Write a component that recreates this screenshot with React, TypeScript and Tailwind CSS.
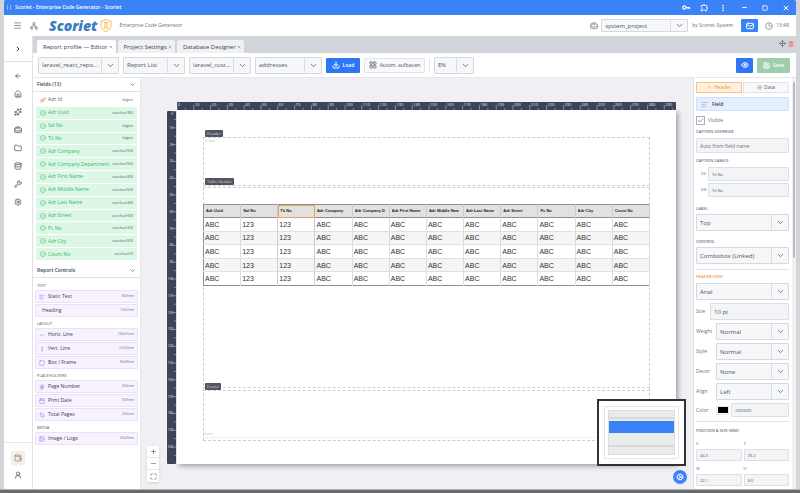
import type { ReactNode } from 'react';
import {
  AlignLeft,
  ArrowLeft,
  ArrowUp,
  ArrowUpDown,
  BriefcaseBusiness,
  Calendar,
  Check,
  ChevronDown,
  ChevronRight,
  CircleCheck,
  Clock,
  Cog,
  Database,
  Download,
  EllipsisVertical,
  Eye,
  Folder,
  Hash,
  House,
  Image,
  Key,
  LayoutGrid,
  List,
  Mail,
  Maximize,
  Menu,
  Minus,
  Move,
  Network,
  Plus,
  Save,
  Settings,
  Sparkles,
  Square,
  Trash2,
  UserRound,
  Wallet,
  Wrench,
  X,
} from 'lucide-react';
import { MdOutlineExtension } from 'react-icons/md';
import clsx from 'clsx';

const fields = [
  ['Adr Uuid', 'varchar(36)'],
  ['Sal No', 'bigint'],
  ['Tit No', 'bigint'],
  ['Adr Company', 'varchar(50)'],
  ['Adr Company Department', 'varchar(50)'],
  ['Adr First Name', 'varchar(40)'],
  ['Adr Middle Name', 'varchar(50)'],
  ['Adr Last Name', 'varchar(40)'],
  ['Adr Street', 'varchar(50)'],
  ['Pc No', 'varchar(20)'],
  ['Adr City', 'varchar(50)'],
  ['Count No', 'varchar(2)'],
];

const controlGroups = [
  {
    title: 'TEXT',
    items: [
      { label: 'Static Text', size: '80x5mm', icon: AlignLeft },
      { label: 'Heading', size: '100x7mm', icon: null },
    ],
  },
  {
    title: 'LAYOUT',
    items: [
      { label: 'Horiz. Line', size: '100x0.5mm', icon: Minus },
      { label: 'Vert. Line', size: '0.5x50mm', icon: EllipsisVertical },
      { label: 'Box / Frame', size: '80x40mm', icon: Square },
    ],
  },
  {
    title: 'PLACEHOLDERS',
    items: [
      { label: 'Page Number', size: '20x5mm', icon: Hash },
      { label: 'Print Date', size: '30x5mm', icon: Calendar },
      { label: 'Total Pages', size: '20x5mm', icon: ArrowUpDown },
    ],
  },
  {
    title: 'MEDIA',
    items: [{ label: 'Image / Logo', size: '40x20mm', icon: Image }],
  },
];

const navItems = [
  { label: 'Back', icon: ArrowLeft },
  { label: 'Home', icon: House },
  { label: 'Assistant', icon: Sparkles },
  { label: 'Projects', icon: BriefcaseBusiness },
  { label: 'Files', icon: Folder },
  { label: 'Database', icon: Database },
  { label: 'Tools', icon: Wrench },
  { label: 'Settings', icon: Settings },
];

const rows = [0, 1, 2, 3, 4];

interface SelectBoxProps {
  label: string;
  value: string;
  id?: string;
  className?: string;
}

function SelectBox({ label, value, id, className }: SelectBoxProps) {
  return (
    <div
      className={clsx(
        'grid grid-cols-[minmax(0,1fr)_17px] rounded-[1px] border border-[#d5d9de] bg-[#f6f7f9]',
        className,
      )}
    >
      <select
        id={id}
        aria-label={id ? undefined : label}
        className="col-span-2 col-start-1 row-start-1 min-w-0 appearance-none bg-transparent pl-[3px] pr-[17px] text-[6px] text-[#4b5563] outline-none"
      >
        <option>{value}</option>
      </select>
      <span className="pointer-events-none col-start-2 row-start-1 flex items-center justify-center border-l border-[#d9dde2] text-[#4b5563]">
        <ChevronDown size={9} />
      </span>
    </div>
  );
}

interface TextBoxProps {
  label: string;
  value?: string;
  placeholder?: string;
  id?: string;
  className?: string;
}

function TextBox({ label, value, placeholder, id, className }: TextBoxProps) {
  return (
    <input
      type="text"
      id={id}
      aria-label={id ? undefined : label}
      defaultValue={value}
      placeholder={placeholder}
      className={clsx(
        'min-w-0 rounded-[1px] border border-[#dcdfe3] bg-[#f3f4f6] px-[3px] text-[#4b5563] outline-none placeholder:text-[#6b7280]',
        className,
      )}
    />
  );
}

function TitleBar() {
  return (
    <div className="flex h-[15px] shrink-0 items-center bg-[#3b82f6] text-white">
      <span className="ml-[3px] flex h-[5px] w-1 justify-between border-x border-[#9db8c9]" />
      <span className="ml-1 text-[5px] font-semibold">Scoriet - Enterprise Code Generator - Scoriet</span>
      <div className="ml-auto flex items-center gap-[10px] pr-[6px]">
        <svg viewBox="0 0 20 12" className="h-[5px] w-2" fill="none" stroke="currentColor" strokeWidth="3">
          <circle cx="6" cy="6" r="4" />
          <path d="M10 6h9v4M15 6v4" />
        </svg>
        <MdOutlineExtension size={9} />
        <EllipsisVertical size={8} strokeWidth={3} />
        <button type="button" aria-label="Minimize" className="ml-1">
          <Minus size={7} strokeWidth={3} />
        </button>
        <button type="button" aria-label="Maximize" className="ml-1">
          <Square size={6} strokeWidth={3} />
        </button>
        <button type="button" aria-label="Close" className="ml-1">
          <X size={8} strokeWidth={3} />
        </button>
      </div>
    </div>
  );
}

function Shield() {
  return (
    <svg viewBox="0 0 24 26" className="h-[13px] w-3" fill="none" stroke="#f2bf55" strokeWidth="2">
      <path d="M12 1c3 2 6 3 10 3v9c0 6-4 10-10 12C6 23 2 19 2 13V4c4 0 7-1 10-3Z" />
      <path d="M7 7h10M7 18h10M10 7v11M14 7v11" />
    </svg>
  );
}

function AppHeader() {
  return (
    <header className="flex h-[21px] shrink-0 items-center bg-white text-[5px] text-[#6b7280]">
      <button type="button" aria-label="Menu" className="ml-[9px]">
        <Menu size={9} />
      </button>
      <Network size={8} className="ml-2" />
      <span className="ml-[11px] font-['Open_Sans',sans-serif] text-[14px] font-extrabold italic leading-4 text-[#3a7dbd]">
        Scoriet
      </span>
      <span className="ml-[3px]">
        <Shield />
      </span>
      <span className="ml-[7px]">Enterprise Code Generator</span>
      <div className="ml-auto flex items-center pr-[7px]">
        <BriefcaseBusiness size={8} />
        <SelectBox label="Project" value="system_project" className="ml-[3px] h-[13px] w-[87px]" />
        <span className="ml-1">by Scoriet System</span>
        <button
          type="button"
          aria-label="Messages"
          className="ml-2 flex h-[13px] w-[17px] items-center justify-center rounded-[1px] bg-[#3b82f6] text-white"
        >
          <Mail size={8} strokeWidth={3} />
        </button>
        <Clock size={8} className="ml-[7px]" />
        <span className="ml-[3px]">13:48</span>
      </div>
    </header>
  );
}

function NavRail() {
  return (
    <nav className="flex w-[29px] shrink-0 flex-col border-r border-[#dfe2e6] bg-white text-[#374151]">
      <button
        type="button"
        aria-label="Expand"
        className="flex h-[26px] items-center justify-center border-b border-[#dfe2e6]"
      >
        <ChevronRight size={8} strokeWidth={3} />
      </button>
      <div className="flex flex-col items-center gap-[10px] pt-[10px]">
        {navItems.map(({ label, icon: Icon }) => (
          <a key={label} href="#" aria-label={label}>
            <Icon size={8} />
          </a>
        ))}
      </div>
      <div className="mt-auto flex flex-col items-center gap-[6px] border-t border-[#e5e7eb] pb-[10px] pt-2">
        <a
          href="#"
          aria-label="Wallet"
          className="flex h-[14px] w-[14px] items-center justify-center rounded-[1px] bg-[#f0f0f0] text-[#a8734d]"
        >
          <Wallet size={8} />
        </a>
        <a href="#" aria-label="Account">
          <UserRound size={8} />
        </a>
      </div>
    </nav>
  );
}

function TabStrip() {
  const tabs = ['Report profile — Editor', 'Project Settings', 'Database Designer'];
  return (
    <div className="flex h-[17px] shrink-0 items-end gap-[2px] bg-[#d1d5db] pl-1">
      {tabs.map((tab, index) => (
        <button
          key={tab}
          type="button"
          className={clsx(
            'flex h-[13px] items-center gap-px rounded-t-[2px] pl-[6px] pr-[3px] text-[6px] font-medium text-[#374151]',
            index === 0 ? 'bg-white' : 'bg-[#f0f1f3]',
          )}
        >
          {tab}
          <X size={4} />
        </button>
      ))}
      <div className="ml-auto flex items-center gap-[2px] self-center pb-[2px] pr-[2px]">
        <Move size={7} className="text-[#4b5563]" />
        <Trash2 size={6} strokeWidth={3} className="text-[#f87171]" />
      </div>
    </div>
  );
}

function Toolbar() {
  return (
    <div className="flex h-[25px] shrink-0 items-center gap-1 border-b border-[#e5e7eb] bg-white pl-[5px] pr-[6px]">
      <SelectBox label="Report" value="laravel_react_repo..." className="h-[17px] w-[81px]" />
      <SelectBox label="Type" value="Report List" className="h-[17px] w-[62px]" />
      <SelectBox label="Database" value="laravel_cust..." className="h-[17px] w-[62px]" />
      <SelectBox label="Table" value="addresses" className="h-[17px] w-[67px]" />
      <button
        type="button"
        className="flex h-[15px] w-[34px] items-center justify-center gap-[3px] rounded-[1px] bg-[#2f76f6] text-[5px] font-semibold text-white"
      >
        <Download size={8} strokeWidth={3} />
        Load
      </button>
      <button
        type="button"
        className="flex h-[15px] w-[61px] items-center justify-center gap-[3px] rounded-[1px] border border-[#e0e3e7] bg-[#f8f9fa] text-[5px] text-[#4b5563]"
      >
        <LayoutGrid size={8} />
        Autom. aufbauen
      </button>
      <span className="h-3 w-px bg-[#e5e7eb]" />
      <SelectBox label="Language" value="EN" className="h-[17px] w-10" />
      <button
        type="button"
        aria-label="Preview"
        className="ml-auto flex h-[15px] w-[17px] items-center justify-center rounded-[1px] bg-[#2f76f6] text-white"
      >
        <Eye size={8} strokeWidth={3} />
      </button>
      <button
        type="button"
        className="flex h-[15px] w-[33px] items-center justify-center gap-[3px] rounded-[1px] bg-[#9fceae] text-[5px] font-semibold text-white"
      >
        <Save size={7} strokeWidth={3} />
        Save
      </button>
    </div>
  );
}

function PanelHeading({ children }: { children: ReactNode }) {
  return (
    <button
      type="button"
      className="flex h-[14px] w-full shrink-0 items-center justify-between border-b border-[#dfe2e6] px-1 text-[5px] font-semibold text-[#374151]"
    >
      {children}
      <ChevronDown size={7} />
    </button>
  );
}

function FieldsPanel() {
  return (
    <aside className="w-[108px] shrink-0 overflow-hidden border-r border-[#e5e7eb] bg-white">
      <PanelHeading>Fields (13)</PanelHeading>
      <ul className="mt-[2px] grid h-[166px] gap-px px-[3px] text-[5px]">
        <li className="flex items-center gap-[2px] px-1 text-[#565d68]">
          <Key size={6} className="text-[#f05252]" />
          Adr Id
          <span className="ml-auto text-[4px]">bigint</span>
        </li>
        {fields.map(([name, type]) => (
          <li key={name} className="flex items-center gap-[2px] rounded-[1px] bg-[#dcf7e6] px-1 text-[#35b869]">
            <CircleCheck size={6} />
            {name}
            <span className="ml-auto text-[4px] text-[#565d68]">{type}</span>
          </li>
        ))}
      </ul>
      <div className="pt-1">
        <PanelHeading>Report Controls</PanelHeading>
      </div>
      <div className="flex flex-col gap-[3px] px-[2px] pt-1">
        {controlGroups.map((group) => (
          <section key={group.title}>
            <h3 className="h-2 pl-[2px] text-[4px] font-medium leading-[8px] text-[#4b5563]">{group.title}</h3>
            <ul className="flex flex-col gap-px">
              {group.items.map(({ label, size, icon: Icon }) => (
                <li
                  key={label}
                  className="flex h-[13px] items-center gap-[3px] rounded-[1px] border border-[#ecdffc] bg-[#f8f1fe] px-[3px] text-[5px] text-[#374151]"
                >
                  {Icon && <Icon size={6} className="text-[#a472f0]" />}
                  <span className={Icon ? '' : 'pl-[3px]'}>{label}</span>
                  <span className="ml-auto text-[3px] text-[#6b7280]">{size}</span>
                </li>
              ))}
            </ul>
          </section>
        ))}
      </div>
    </aside>
  );
}

// Rulers are drawn in page pixels, 499px for the 297mm of an A4 sheet.
const MM = 499 / 297;

function TopRuler() {
  return (
    <svg width="499" height="8" viewBox="0 0 499 8" className="rounded-[1px] bg-[#3c4559]">
      {Array.from({ length: 60 }, (_, i) => (
        <line key={i} x1={i * 5 * MM} x2={i * 5 * MM} y1={i % 2 ? 6 : 3} y2="8" stroke="#b8bfcc" strokeWidth="0.6" />
      ))}
      {Array.from({ length: 30 }, (_, i) => (
        <text key={i} x={i * 10 * MM + 1} y="4" fontSize="4" fill="#e2e5ea">
          {i * 10}
        </text>
      ))}
    </svg>
  );
}

function LeftRuler() {
  return (
    <svg width="9" height="353" viewBox="0 0 9 353" className="rounded-[1px] bg-[#3c4559]">
      {Array.from({ length: 42 }, (_, i) => (
        <line key={i} y1={i * 5 * MM} y2={i * 5 * MM} x1={i % 2 ? 7 : 5} x2="9" stroke="#b8bfcc" strokeWidth="0.6" />
      ))}
      {Array.from({ length: 21 }, (_, i) => (
        <text key={i} x="6" y={i * 10 * MM + (i ? 1 : 4)} fontSize="3" fill="#e2e5ea" textAnchor="end">
          {i * 10}
        </text>
      ))}
    </svg>
  );
}

function ReportTable() {
  return (
    <table className="h-[82px] w-full table-fixed border-collapse border border-[#8f8f8f] border-r-[#c05060] text-left font-['Liberation_Sans',Arial,sans-serif] leading-none">
      <thead>
        <tr className="h-[13px] border-b border-[#8f8f8f] bg-[#e1e1e1] text-[4px] text-[#222222]">
          {fields.map(([name]) => (
            <th
              key={name}
              className={clsx(
                'pl-[2px] pr-1 font-bold',
                name === 'Tit No' ? 'outline outline-1 -outline-offset-1 outline-[#f0a050]' : 'border-r border-[#cccccc]',
              )}
            >
              <span className="block overflow-hidden whitespace-nowrap">{name}</span>
            </th>
          ))}
        </tr>
      </thead>
      <tbody>
        {rows.map((row) => (
          <tr key={row} className="border-b border-[#e0e0e0] bg-white text-[7px] text-[#333333] last:border-[#8f8f8f] even:bg-[#f5f5f5]">
            {fields.map(([name]) => (
              <td
                key={name}
                className={clsx('border-r pl-[1px]', name === 'Sal No' || name === 'Tit No' ? 'border-[#c3d0ea]' : 'border-[#dddddd]')}
              >
                {name === 'Sal No' || name === 'Tit No' ? '123' : 'ABC'}
              </td>
            ))}
          </tr>
        ))}
      </tbody>
    </table>
  );
}

function BandLabel({ children, className }: { children: ReactNode; className: string }) {
  return (
    <span className={clsx('absolute rounded-[1px] bg-[#55555f] px-[2px] text-[4px] leading-[7px] text-[#d5d5dc]', className)}>
      {children}
    </span>
  );
}

function Paper() {
  return (
    <div className="relative h-[354px] w-[499px] bg-white shadow-[2px_2px_5px_rgba(0,0,0,0.35)]">
      {/* printable area and its bands */}
      <div className="absolute left-[26px] top-[27px] h-[304px] w-[447px] border border-dashed border-[#c0cfe6]" />
      <div className="absolute left-[26px] top-[75px] h-[3px] w-[447px] border-y border-dashed border-[#c5d8cf]" />
      <div className="absolute left-[26px] top-[277px] h-1 w-[447px] border-y border-dashed border-[#d8cdd2]" />
      <div className="absolute left-[26px] top-[327px] w-[447px] border-t border-dotted border-[#dce4f0]" />
      <BandLabel className="left-[28px] top-[20px]">Header</BandLabel>
      <BandLabel className="left-[28px] top-[68px]">Table Header</BandLabel>
      <BandLabel className="left-[28px] top-[273px]">Footer</BandLabel>
      <span className="absolute left-[28px] top-[29px] text-[3px] leading-[4px] text-[#86d8a0]">Header</span>
      <span className="absolute left-[27px] top-[322px] text-[3px] leading-[4px] text-[#f59a9a]">Footer</span>
      <div className="absolute left-[26px] top-[94px] w-[447px]">
        <ReportTable />
      </div>
    </div>
  );
}

function MiniMap() {
  return (
    <div className="absolute bottom-[23px] right-[7px] h-[67px] w-[89px] border-2 border-[#303335] bg-white p-[5px]">
      <div className="h-full border border-[#e5e7eb] p-[3px]">
        <div className="flex h-full flex-col border border-[#dcdee0] bg-[#e9ebec]">
          <span className="mt-[6px] h-[2px] bg-[#d8dadc]" />
          <span className="mt-[2px] h-3 bg-[#3b82f6]" />
          <span className="mt-auto h-[2px] bg-[#d8dadc]" />
          <span className="h-[7px]" />
        </div>
      </div>
    </div>
  );
}

function Canvas() {
  return (
    <main className="relative min-w-0 flex-1 overflow-hidden bg-[#f0f0f4] pl-[26px] pt-6">
      <div className="grid grid-cols-[9px_499px] grid-rows-[8px_354px] gap-x-px">
        <div className="col-start-2">
          <TopRuler />
        </div>
        <div className="pt-px">
          <LeftRuler />
        </div>
        <Paper />
      </div>
      <div className="absolute bottom-[7px] left-[6px] flex w-3 flex-col divide-y divide-[#e5e7eb] bg-white text-[#4b5563] shadow-sm">
        <button type="button" aria-label="Zoom in" className="flex h-3 items-center justify-center">
          <Plus size={7} />
        </button>
        <button type="button" aria-label="Zoom out" className="flex h-3 items-center justify-center">
          <Minus size={7} />
        </button>
        <button type="button" aria-label="Fit view" className="flex h-3 items-center justify-center">
          <Maximize size={7} />
        </button>
      </div>
      <MiniMap />
      <button
        type="button"
        aria-label="Canvas settings"
        className="absolute bottom-[5px] right-[6px] flex h-[14px] w-[14px] items-center justify-center rounded-full bg-[#3b82f6] text-white"
      >
        <Cog size={8} />
      </button>
    </main>
  );
}

function Caption({ children, className }: { children: ReactNode; className?: string }) {
  return <h3 className={clsx('text-[4px] font-semibold leading-[8px]', className)}>{children}</h3>;
}

const fontRows = [
  ['Weight', 'Normal'],
  ['Style', 'Normal'],
  ['Decor', 'None'],
  ['Align', 'Left'],
];

const geometry = [
  ['X', '44.3'],
  ['Y', '29.2'],
  ['W', '22.1'],
  ['H', '8.0'],
];

function PropertiesPanel() {
  return (
    <aside className="flex w-[103px] shrink-0 overflow-hidden border-l border-[#dfe2e6] bg-white text-[#6b7280]">
      <div className="flex min-w-0 flex-1 flex-col pl-[2px] pr-[3px] pt-1">
        <div className="grid grid-cols-2 gap-px text-[5px] font-medium">
          <button type="button" className="flex h-[11px] items-center justify-center gap-[2px] border border-[#f5c58e] bg-[#ffefdc] text-[#f0984a]">
            <ArrowUp size={5} />
            Header
          </button>
          <button type="button" className="flex h-[11px] items-center justify-center gap-[2px] border border-[#e0e3e7] bg-[#f8f9fa] text-[#565d68]">
            <List size={5} />
            Data
          </button>
        </div>
        <div className="mt-1 flex h-[14px] items-center gap-1 rounded-[1px] border border-[#d3e0fb] bg-[#e5eefe] px-1 text-[5px] font-semibold text-[#374151]">
          <AlignLeft size={7} className="text-[#7ea5f5]" />
          Field
        </div>
        <label className="mt-[5px] flex h-[9px] items-center gap-[3px] text-[5px]">
          <span className="grid h-[9px] w-[9px] place-items-center">
            <input
              type="checkbox"
              defaultChecked
              className="peer col-start-1 row-start-1 h-[9px] w-[9px] appearance-none border border-[#a9afb8] bg-white"
            />
            <Check size={7} className="invisible col-start-1 row-start-1 text-[#374151] peer-checked:visible" />
          </span>
          Visible
        </label>
        <Caption className="mt-[3px]">CAPTION OVERRIDE</Caption>
        <TextBox label="Caption override" placeholder="Auto from field name" className="mt-[2px] h-[15px] text-[5px]" />
        <Caption className="mt-1">CAPTION LABELS</Caption>
        <div className="mt-[2px] grid grid-cols-[12px_minmax(0,1fr)] items-center gap-y-[2px] text-[4px]">
          <label htmlFor="caption-de" className="pl-[5px]">
            DE
          </label>
          <TextBox id="caption-de" label="DE" value="Tit No" className="h-[14px]" />
          <label htmlFor="caption-en" className="pl-[5px] text-[#3b66f0]">
            EN
          </label>
          <TextBox id="caption-en" label="EN" value="Tit No" className="h-[14px]" />
        </div>
        <Caption className="mt-2">LABEL</Caption>
        <SelectBox label="Label" value="Top" className="mt-px h-[17px]" />
        <Caption className="mt-[7px]">CONTROL</Caption>
        <SelectBox label="Control" value="Combobox (Linked)" className="mt-px h-[17px]" />
        <Caption className="mt-[5px] border-t border-[#e0e3e7] pt-[3px] text-[#f0984a]">HEADER FONT</Caption>
        <SelectBox label="Header font" value="Arial" className="mt-[2px] h-[17px]" />
        <div className="mt-[3px] flex items-center text-[5px]">
          <label htmlFor="font-size" className="w-[14px]">
            Size
          </label>
          <TextBox id="font-size" label="Size" value="10 pt" className="h-[17px] flex-1 text-[6px]" />
        </div>
        <div className="mt-[3px] flex flex-col gap-[3px]">
          {fontRows.map(([label, value]) => (
            <div key={label} className="flex items-center text-[5px]">
              <label htmlFor={`font-${label}`} className="w-[20px]">
                {label}
              </label>
              <SelectBox id={`font-${label}`} label={label} value={value} className="h-[17px] flex-1" />
            </div>
          ))}
        </div>
        <div className="mt-[3px] flex items-center border-b border-[#e0e3e7] pb-1 text-[5px]">
          <label htmlFor="font-color" className="w-[20px]">
            Color
          </label>
          <span className="flex h-[9px] w-[13px] items-center justify-center border border-[#e5e7eb]">
            <span className="h-[6px] w-[10px] bg-black" />
          </span>
          <TextBox id="font-color" label="Color" value="#000000" className="ml-[2px] h-[14px] flex-1 text-[4px]" />
        </div>
        <Caption className="mt-[5px]">POSITION &amp; SIZE (MM)</Caption>
        <div className="mt-[5px] grid grid-cols-2 gap-x-[2px] gap-y-1 text-[4px]">
          {geometry.map(([label, value]) => (
            <label key={label} className="flex flex-col gap-px leading-[8px]">
              {label}
              <TextBox label={label} value={value} className="h-3" />
            </label>
          ))}
        </div>
      </div>
      <div className="w-1 bg-[#f0f1f3] px-px pt-1">
        <div className="h-[176px] rounded-full bg-[#b9bec6]" />
      </div>
    </aside>
  );
}

export default function App() {
  return (
    <div className="flex h-screen flex-col overflow-hidden bg-[#d3d5d8] font-['Open_Sans','Noto_Sans',sans-serif] leading-none">
      <div className="flex min-h-0 flex-1 px-1">
        <div className="flex min-w-0 flex-1 flex-col overflow-hidden rounded-[2px]">
          <TitleBar />
          <AppHeader />
          <div className="flex min-h-0 flex-1">
            <NavRail />
            <div className="flex min-w-0 flex-1 flex-col">
              <TabStrip />
              <Toolbar />
              <div className="flex min-h-0 flex-1">
                <FieldsPanel />
                <Canvas />
                <PropertiesPanel />
              </div>
            </div>
          </div>
        </div>
      </div>
      <div className="h-1 shrink-0 border-t border-[#b5b5b5] bg-[#6a6a6a]" />
    </div>
  );
}
